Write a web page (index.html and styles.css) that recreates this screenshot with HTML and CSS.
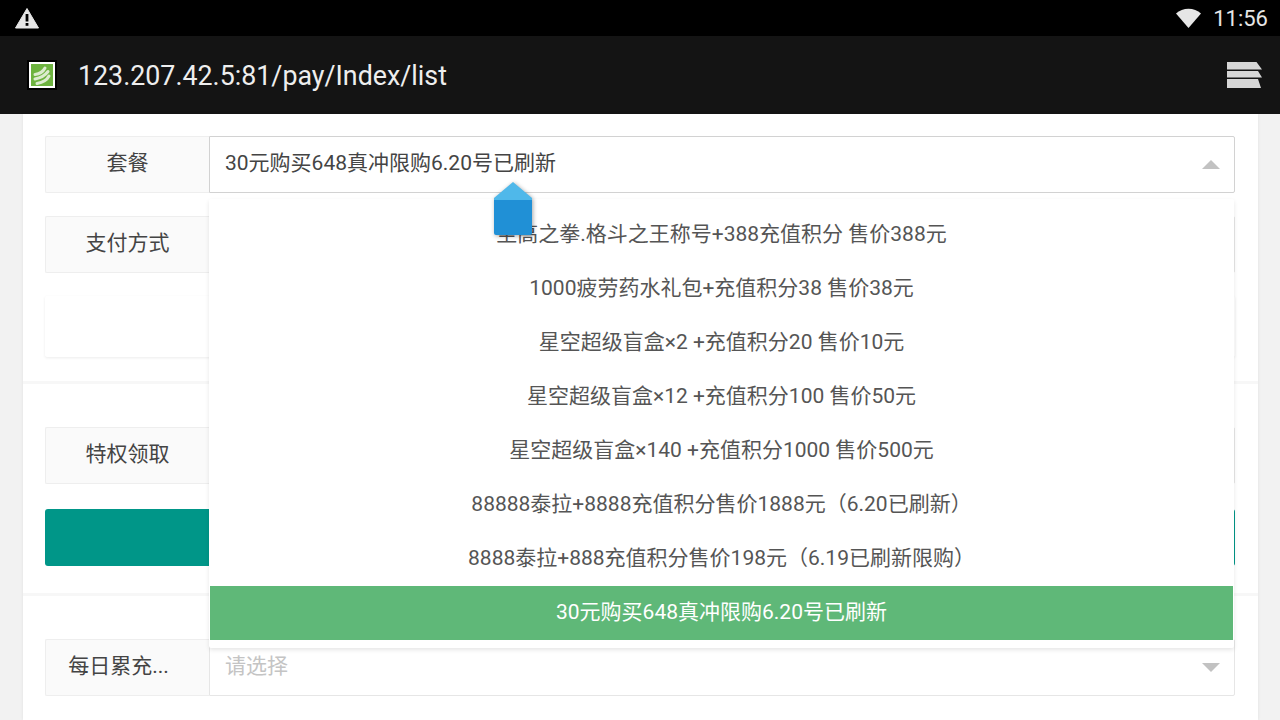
FILE: index.html
```html
<!DOCTYPE html>
<html lang="zh-CN">
<head>
<meta charset="utf-8">
<title>pay</title>
<link rel="stylesheet" href="styles.css">
</head>
<body>
<div class="screen">
  <header class="status">
    <svg class="warn" width="26" height="24" viewBox="0 0 26 24"><path d="M13 2.500 L24.500 22 H1.500 Z" fill="#e6e6e6" stroke="#e6e6e6" stroke-linejoin="round"/><rect x="11.600" y="8" width="2.800" height="7.500" fill="#000"/><rect x="11.600" y="17" width="2.800" height="2.800" fill="#000"/></svg>
    <div class="status-right">
      <svg class="wifi" width="27" height="20" viewBox="0 0 27 20"><path d="M1 5.500 C7.500 -1 19.500 -1 26 5.500 L13.500 20 Z" fill="#e6e6e6"/></svg>
      <span class="clock">11:56</span>
    </div>
  </header>
  <div class="appbar">
    <div class="favicon">
      <svg viewBox="0 0 22 22"><rect width="22" height="22" fill="#6db33f"/><path d="M4 10.500 C8 10 12 8 14 4 M4 15 C9 14 14 11.500 17 7.500 M6 19.500 C11 18.500 16 16 18 12" fill="none" stroke="#dcebcf" stroke-width="3" stroke-linecap="round"/></svg>
    </div>
    <span class="url">123.207.42.5:81/pay/Index/list</span>
    <svg class="layers" width="36" height="27" viewBox="0 0 36 27"><path d="M0 0 H29.500 L35 7.500 H0 Z M0 9 H31 L35 15.500 H0 Z M0 17 H31 L34 26 H0 Z" fill="#d6d6d6"/></svg>
  </div>
  <main class="content">
    <section class="card card-first">
      <div class="row">
        <div class="label">套餐</div>
        <div class="field field-active">
          <span class="value">30元购买648真冲限购6.20号已刷新</span>
          <i class="caret caret-up"></i>
        </div>
      </div>
      <div class="row">
        <div class="label">支付方式</div>
        <div class="field"></div>
      </div>
      <div class="blank"></div>
    </section>
    <section class="card card-second">
      <div class="row">
        <div class="label">特权领取</div>
        <div class="field"></div>
      </div>
      <div class="submit"></div>
    </section>
    <section class="card card-third">
      <div class="row">
        <div class="label label-clip">每日累充...</div>
        <div class="field">
          <span class="placeholder">请选择</span>
          <i class="caret caret-down"></i>
        </div>
      </div>
    </section>
  </main>
  <ul class="menu">
    <li>至高之拳.格斗之王称号+388充值积分 售价388元</li>
    <li>1000疲劳药水礼包+充值积分38 售价38元</li>
    <li>星空超级盲盒×2 +充值积分20 售价10元</li>
    <li>星空超级盲盒×12 +充值积分100 售价50元</li>
    <li>星空超级盲盒×140 +充值积分1000 售价500元</li>
    <li>88888泰拉+8888充值积分售价1888元（6.20已刷新）</li>
    <li>8888泰拉+888充值积分售价198元（6.19已刷新限购）</li>
    <li class="selected">30元购买648真冲限购6.20号已刷新</li>
  </ul>
  <div class="pointer">
    <svg width="44" height="60" viewBox="0 0 44 60"><path d="M3 19 L22 3 L41 19 V21 H3 Z" fill="#4fb8ea"/><path d="M3 21 H41 V54 Q41 56 39 56 H5 Q3 56 3 54 Z" fill="#2090d6"/></svg>
  </div>
</div>
</body>
</html>
```
FILE: styles.css
```css
* { box-sizing: border-box; }
html, body { margin: 0; padding: 0; }
body {
  width: 1280px;
  height: 720px;
  overflow: hidden;
  font-family: Roboto, "Noto Sans CJK SC", sans-serif;
}
.screen {
  position: relative;
  width: 1280px;
  height: 720px;
  overflow: hidden;
  display: flex;
  flex-direction: column;
  background: #f2f2f2;
}
.status {
  flex: none;
  height: 36px;
  background: #000;
  display: flex;
  align-items: center;
  justify-content: space-between;
  padding: 0 12px 0 14px;
}
.warn { display: block; }
.status-right { display: flex; align-items: center; gap: 11px; }
.wifi { display: block; }
.clock { color: #e6e6e6; font-size: 22px; }
.appbar {
  flex: none;
  height: 78px;
  background: #141414;
  display: flex;
  align-items: center;
  padding: 0 17px 0 27px;
}
.favicon {
  flex: none;
  width: 30px;
  height: 30px;
  padding: 2px;
  border: 2px solid #000;
  background: #fff;
}
.favicon svg { display: block; width: 22px; height: 22px; }
.url { margin-left: 21px; padding-top: 2px; color: #eee; font-size: 26.800px; flex: 1; }
.layers { display: block; margin-top: 1px; }
.content {
  flex: 1;
  margin: 0 22px 0 23px;
  background: #fff;
  display: flex;
  flex-direction: column;
  box-shadow: 0 0 3px rgba(0,0,0,.08);
}
.card { padding: 0 23px 0 22px; border-bottom: 3px solid #f7f7f7; }
.card-first { height: 270px; padding-top: 22px; }
.card-second { height: 212px; padding-top: 43px; }
.card-third { flex: 1; padding-top: 43px; border-bottom: 0; }
.row { display: flex; height: 57px; margin-bottom: 23px; }
.label {
  flex: none;
  width: 164px;
  padding-bottom: 7px;
  background: #fafafa;
  border: 1px solid #eee;
  border-right: 0;
  border-radius: 2px 0 0 2px;
  color: #444;
  font-size: 21px;
  display: flex;
  align-items: center;
  justify-content: center;
}
.label-clip { padding-right: 18px; }
.field {
  flex: 1;
  border: 1px solid #e6e6e6;
  border-radius: 0 2px 2px 0;
  background: #fff;
  display: flex;
  align-items: center;
  justify-content: space-between;
  padding: 0 14px 7px 15px;
  font-size: 21px;
}
.field-active { border-color: #d2d2d2; }
.value { color: #444; }
.placeholder { color: #c4c4c4; }
.caret { width: 0; height: 0; margin-top: 7px; border-left: 9px solid transparent; border-right: 9px solid transparent; }
.caret-up { border-bottom: 9px solid #c2c2c2; }
.caret-down { border-top: 9px solid #c2c2c2; }
.blank {
  height: 61px;
  background: #fff;
  box-shadow: 0 1px 3px rgba(0,0,0,.08);
  border-radius: 2px;
}
.submit { height: 57px; margin-top: 25px; background: #009688; border-radius: 3px; }
.menu {
  position: absolute;
  left: 209px;
  top: 199px;
  width: 1025px;
  height: 449px;
  margin: 0;
  padding: 9px 1px 8px;
  list-style: none;
  background: #fff;
  border-radius: 2px;
  box-shadow: 0 2px 4px rgba(0,0,0,.1);
}
.menu li {
  height: 54px;
  padding-bottom: 7px;
  display: flex;
  align-items: center;
  justify-content: center;
  color: #555;
  font-size: 21px;
  white-space: nowrap;
}
.menu li.selected { background: #5fb878; color: #fff; }
.pointer {
  position: absolute;
  left: 491px;
  top: 179px;
  line-height: 0;
  filter: drop-shadow(1px 1px 2px rgba(0,0,0,.35));
}
```
